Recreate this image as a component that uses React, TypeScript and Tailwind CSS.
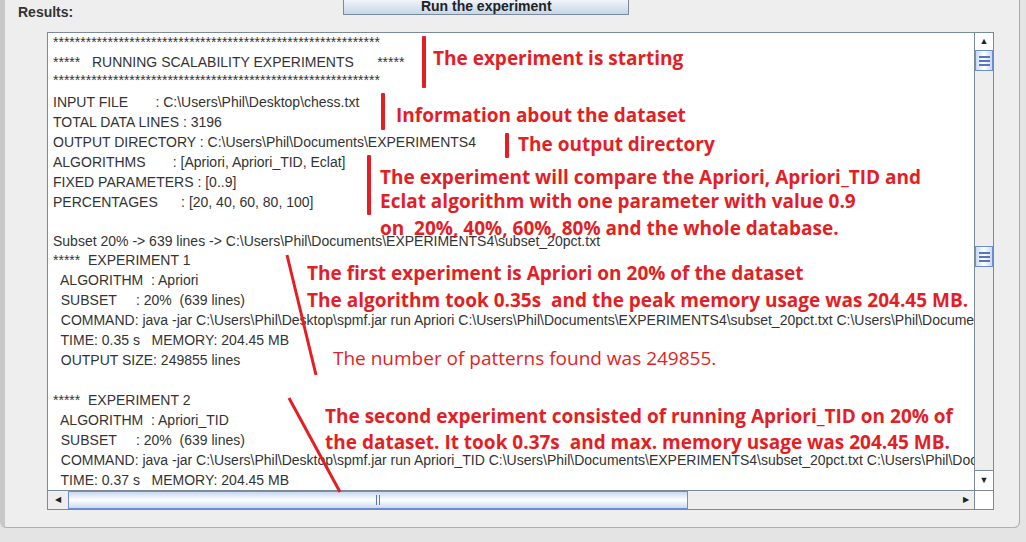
import React from "react";

const lines: [number, string][] = [
  [43, "************************************************************"],
  [63, "*****   RUNNING SCALABILITY EXPERIMENTS      *****"],
  [81, "************************************************************"],
  [103, "INPUT FILE       : C:\\Users\\Phil\\Desktop\\chess.txt"],
  [123, "TOTAL DATA LINES : 3196"],
  [143, "OUTPUT DIRECTORY : C:\\Users\\Phil\\Documents\\EXPERIMENTS4"],
  [163, "ALGORITHMS       : [Apriori, Apriori_TID, Eclat]"],
  [183, "FIXED PARAMETERS : [0..9]"],
  [203, "PERCENTAGES      : [20, 40, 60, 80, 100]"],
  [242, "Subset 20% -> 639 lines -> C:\\Users\\Phil\\Documents\\EXPERIMENTS4\\subset_20pct.txt"],
  [261, "*****  EXPERIMENT 1"],
  [281, "  ALGORITHM  : Apriori"],
  [301, "  SUBSET     : 20%  (639 lines)"],
  [321, "  COMMAND: java -jar C:\\Users\\Phil\\Desktop\\spmf.jar run Apriori C:\\Users\\Phil\\Documents\\EXPERIMENTS4\\subset_20pct.txt C:\\Users\\Phil\\Documents"],
  [341, "  TIME: 0.35 s   MEMORY: 204.45 MB"],
  [361, "  OUTPUT SIZE: 249855 lines"],
  [401, "*****  EXPERIMENT 2"],
  [421, "  ALGORITHM  : Apriori_TID"],
  [441, "  SUBSET     : 20%  (639 lines)"],
  [461, "  COMMAND: java -jar C:\\Users\\Phil\\Desktop\\spmf.jar run Apriori_TID C:\\Users\\Phil\\Documents\\EXPERIMENTS4\\subset_20pct.txt C:\\Users\\Phil\\Documents"],
  [481, "  TIME: 0.37 s   MEMORY: 204.45 MB"],
];

const notes: { x: number; y: number; t: string; bold?: boolean }[] = [
  { x: 433, y: 58, t: "The experiment is starting" },
  { x: 396, y: 115, t: "Information about the dataset" },
  { x: 518, y: 144, t: "The output directory" },
  { x: 380, y: 177, t: "The experiment will compare the Apriori, Apriori_TID and" },
  { x: 380, y: 201, t: "Eclat algorithm with one parameter with value 0.9" },
  { x: 380, y: 228, t: "on  20%, 40%, 60%, 80% and the whole database." },
  { x: 307, y: 273, t: "The first experiment is Apriori on 20% of the dataset" },
  { x: 307, y: 300, t: "The algorithm took 0.35s  and the peak memory usage was 204.45 MB." },
  { x: 333, y: 358, t: "The number of patterns found was 249855.", bold: false },
  { x: 325, y: 416, t: "The second experiment consisted of running Apriori_TID on 20% of" },
  { x: 325, y: 442, t: "the dataset. It took 0.37s  and max. memory usage was 204.45 MB." },
];

const bars = [
  { x: 422, y: 36, h: 52 },
  { x: 381, y: 93, h: 37 },
  { x: 505, y: 133, h: 25 },
  { x: 367, y: 155, h: 60 },
];

const VThumb = () => (
  <div className="h-[21px] border border-[#6d8ed0] bg-gradient-to-r from-[#c9d9f3] via-white to-[#c9d9f3] flex flex-col items-center justify-center gap-[2px]">
    <div className="w-[11px] h-[2px] bg-[#5875b9]" /><div className="w-[11px] h-[2px] bg-[#5875b9]" /><div className="w-[11px] h-[2px] bg-[#5875b9]" />
  </div>
);

export default function App() {
  return (
    <div className="relative w-[1026px] h-[542px] bg-[#e4e4e4] overflow-hidden" style={{ fontFamily: "'Liberation Sans', Arial, sans-serif" }}>
      <div className="absolute left-0 top-0 w-[1020px] h-[528px] bg-[#eeeeee] border-l-[5px] border-l-[#c8c8c8] border-r border-r-[#a9a9a9] border-b border-b-[#b0b0b0] rounded-br-[6px] rounded-bl-[6px]">
        <div className="flex items-start h-[20px]">
          <div className="ml-[13px] mt-[2px] text-[14px] font-bold text-[#333]">Results:</div>
          <div className="ml-[270px] w-[286px] h-[17px] -mt-[2px] border border-[#7a8a99] bg-gradient-to-b from-[#f4f7fb] to-[#c6d6e8] text-[14px] font-bold text-[#222] flex items-center justify-center">Run the experiment</div>
        </div>
        <div className="ml-[42px] mt-[12px] w-[947px] h-[478px] border border-[#7a8a99] bg-white flex flex-col">
          <div className="flex flex-1 min-h-0">
            <div className="flex-1 relative overflow-hidden text-[14px] text-[#333] whitespace-pre">
              {lines.map(([y, t], i) => (
                <div key={i} className="absolute left-[5px] leading-[16px]" style={{ top: y - 42 }}>{t}</div>
              ))}
            </div>
            <div className="w-[19px] border-l border-[#7a8a99] bg-[#eeeeee] flex flex-col">
              <div className="h-[17px] bg-white flex items-center justify-center text-[9px] text-[#222]">▲</div>
              <VThumb />
              <div className="h-[175px]" />
              <VThumb />
              <div className="flex-1" />
              <div className="h-[20px] bg-white border-t border-[#7a8a99] flex items-center justify-center text-[9px] text-[#222]">▼</div>
            </div>
          </div>
          <div className="h-[19px] border-t border-[#7a8a99] bg-[#eeeeee] flex">
            <div className="w-[20px] flex items-center justify-center text-[8px] text-[#222]">◀</div>
            <div className="w-[620px] border border-[#6d8ed0] bg-gradient-to-b from-[#c9d9f3] via-white to-[#c9d9f3] flex items-center justify-center gap-[2px]">
              <div className="w-[1px] h-[10px] bg-[#5875b9]" /><div className="w-[1px] h-[10px] bg-[#5875b9]" />
            </div>
            <div className="flex-1" />
            <div className="w-[16px] flex items-center justify-center text-[8px] text-[#222]">▶</div>
            <div className="w-[19px] border-l border-[#7a8a99] bg-white" />
          </div>
        </div>
      </div>
      {bars.map((b, i) => (
        <div key={i} className="absolute w-[4px] bg-[#e31e24] rounded-[1px]" style={{ left: b.x, top: b.y, height: b.h }} />
      ))}
      <svg className="absolute left-0 top-0" width="1026" height="542">
        <line x1="287" y1="255" x2="316" y2="375" stroke="#e31e24" strokeWidth="3" />
        <line x1="289" y1="398" x2="340" y2="492" stroke="#e31e24" strokeWidth="3" />
      </svg>
      {notes.map((n, i) => (
        <div key={i} className={`absolute text-[#e31e24] text-[19px] leading-[24px] whitespace-pre ${n.bold === false ? "font-normal" : "font-bold"}`} style={{ left: n.x, top: n.y - 12, fontFamily: "'Open Sans', 'Noto Sans', sans-serif" }}>{n.t}</div>
      ))}
    </div>
  );
}
